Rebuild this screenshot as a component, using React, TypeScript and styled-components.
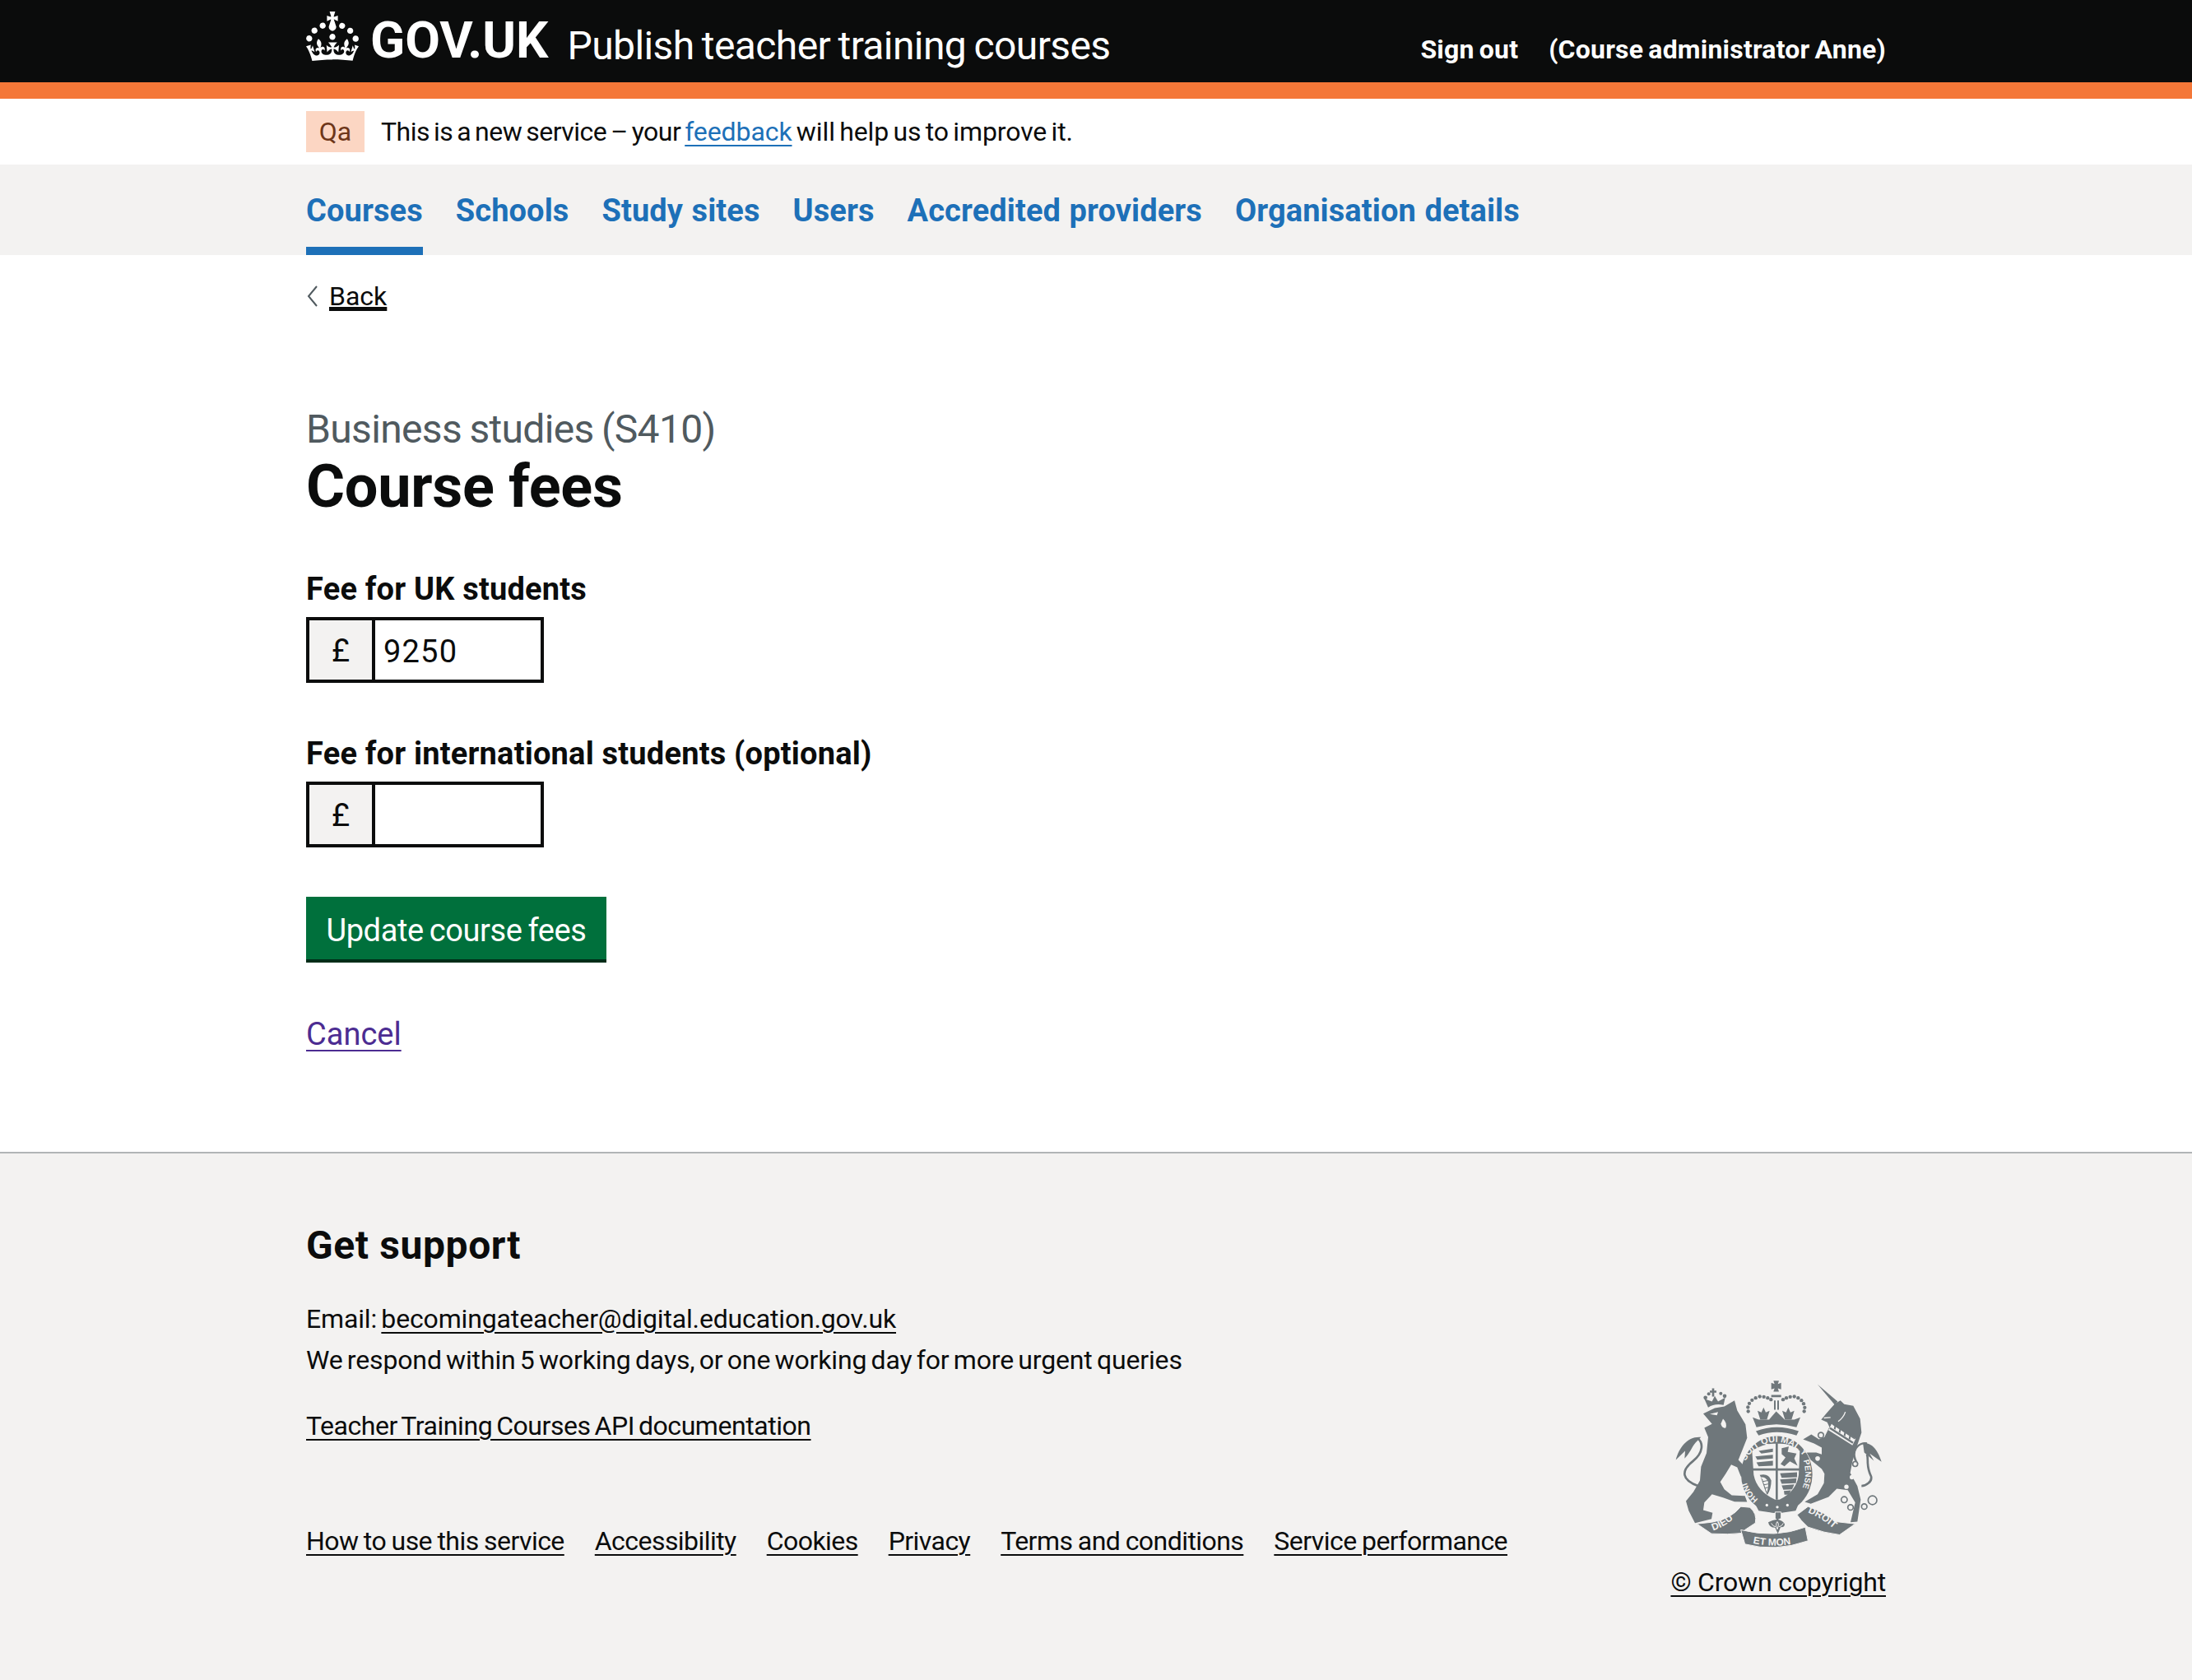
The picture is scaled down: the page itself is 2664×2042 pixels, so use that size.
import React from 'react'
import styled, { createGlobalStyle } from 'styled-components'

const BLACK = '#0b0c0c'
const BLUE = '#1d70b8'
const GREY_BG = '#f3f2f1'
const CREST = '#6f777b'
const FONT = 'Roboto, "Noto Sans", Arial, sans-serif'

const GlobalStyle = createGlobalStyle`
    html, body {
        margin: 0;
        padding: 0;
        background: #fff;
        color: ${BLACK};
        font-family: ${FONT};
    }
    * {
        box-sizing: border-box;
    }
`

const Container = styled.div`
    width: 1920px;
    margin: 0 auto;
`

const Header = styled.header`
    background: ${BLACK};
    height: 120px;
    border-bottom: 20px solid #f47738;
`

const HeaderInner = styled(Container)`
    display: flex;
    align-items: flex-start;
    justify-content: space-between;
`

const Brand = styled.div`
    display: flex;
    align-items: flex-start;
    padding-top: 14px;
`

const Crown = styled.svg`
    width: 64px;
    height: 60px;
    fill: #fff;
    flex: none;
`

const LogoText = styled.span`
    margin-left: 14px;
    margin-top: 5px;
    font-size: 62px;
    line-height: 60px;
    font-weight: 700;
    color: #fff;
`

const ServiceName = styled.span`
    margin-left: 23px;
    margin-top: 12px;
    font-size: 48px;
    line-height: 60px;
    color: #fff;
    letter-spacing: -0.6px;
    word-spacing: -2px;
`

const HeaderLinks = styled.div`
    display: flex;
    gap: 37px;
    padding-top: 40px;
`

const HeaderLink = styled.a`
    font-size: 32px;
    line-height: 40px;
    font-weight: 700;
    color: #fff;
    text-decoration: none;
    letter-spacing: 0.2px;
    word-spacing: -2px;
`

const PhaseBanner = styled.div`
    height: 80px;
    display: flex;
    align-items: center;
`

const PhaseRow = styled(Container)`
    display: flex;
    align-items: center;
    gap: 20px;
`

const PhaseTag = styled.strong`
    width: 71px;
    height: 50px;
    display: flex;
    align-items: center;
    justify-content: center;
    background: #fcd6c3;
    color: #6e3619;
    font-size: 32px;
    font-weight: 400;
`

const PhaseText = styled.span`
    font-size: 32px;
    line-height: 40px;
    letter-spacing: -0.1px;
    word-spacing: -2.5px;
`

const PhaseLead = styled.span`
    letter-spacing: -0.5px;
`

const Link = styled.a<{ $color?: string }>`
    color: ${(p) => p.$color ?? BLACK};
    text-decoration: underline;
    text-decoration-thickness: 2px;
    text-underline-offset: 0.16em;
`

const Nav = styled.nav`
    background: ${GREY_BG};
    height: 110px;
`

const NavList = styled(Container)`
    display: flex;
    gap: 40px;
`

const NavItem = styled.a<{ $active?: boolean }>`
    display: block;
    height: 110px;
    padding-top: 33px;
    font-size: 38px;
    line-height: 46px;
    font-weight: 700;
    color: ${BLUE};
    text-decoration: none;
    letter-spacing: 0.1px;
    word-spacing: 1px;
    border-bottom: 10px solid ${(p) => (p.$active ? BLUE : 'transparent')};
`

const BackLink = styled.a`
    display: inline-flex;
    align-items: center;
    gap: 12px;
    margin-top: 30px;
    font-size: 32px;
    line-height: 40px;
    color: ${BLACK};
`

const BackText = styled.span`
    text-decoration: underline;
    text-decoration-thickness: 2px;
    text-underline-offset: 0.16em;
`

const Chevron = styled.svg`
    width: 16px;
    height: 26px;
    fill: none;
    stroke: #505a5f;
    stroke-width: 2;
`

const Main = styled.main`
    height: 1090px;
`

const Caption = styled.div`
    margin-top: 112px;
    font-size: 48px;
    line-height: 60px;
    color: #505a5f;
    letter-spacing: -0.65px;
    word-spacing: -2px;
`

const Title = styled.h1`
    margin: 0 0 58px;
    font-size: 72px;
    line-height: 80px;
    font-weight: 700;
    letter-spacing: -0.3px;
`

const FieldLabel = styled.label`
    display: block;
    padding-top: 2px;
    font-size: 38px;
    line-height: 48px;
    font-weight: 700;
    margin-bottom: 10px;
    letter-spacing: 0.2px;
`

const Field = styled.div`
    margin-bottom: 60px;
`

const InputWrap = styled.div`
    display: flex;
`

const Prefix = styled.div`
    width: 80px;
    height: 80px;
    padding-top: 2px;
    border: 4px solid ${BLACK};
    border-right: 0;
    background: ${GREY_BG};
    display: flex;
    align-items: center;
    justify-content: center;
    font-size: 38px;
`

const Input = styled.input`
    width: 209px;
    height: 80px;
    border: 4px solid ${BLACK};
    border-radius: 0;
    padding: 3px 10px 0;
    font-family: ${FONT};
    font-size: 38px;
    letter-spacing: 1.2px;
    color: ${BLACK};
    outline: none;
`

const SubmitButton = styled.button`
    display: block;
    width: 365px;
    height: 80px;
    padding: 2px 0 0;
    border: 0;
    background: #00703c;
    box-shadow: inset 0 -4px 0 #002d18;
    color: #fff;
    font-family: ${FONT};
    font-size: 38px;
    letter-spacing: -0.4px;
    word-spacing: -2px;
`

const CancelRow = styled.div`
    margin-top: 62px;
    font-size: 38px;
    line-height: 50px;
`

const Footer = styled.footer`
    height: 642px;
    background: ${GREY_BG};
    border-top: 2px solid #b1b4b6;
    padding-top: 82px;
`

const FooterInner = styled(Container)`
    display: flex;
    justify-content: space-between;
    align-items: flex-end;
`

const FooterMain = styled.div`
    font-size: 32px;
    line-height: 50px;
    letter-spacing: -0.15px;
    word-spacing: -2.5px;
`

const SupportTitle = styled.h2`
    margin: 0 0 34px;
    font-size: 48px;
    line-height: 60px;
    font-weight: 700;
    letter-spacing: 0.6px;
    word-spacing: 0;
`

const ApiRow = styled.div`
    margin-top: 30px;
    letter-spacing: -0.45px;
`

const MetaLinks = styled.div`
    display: flex;
    gap: 37px;
    margin-top: 90px;
    margin-bottom: 50px;
    letter-spacing: -0.55px;
    word-spacing: -1px;
`

const CopyrightBlock = styled.div`
    display: flex;
    flex-direction: column;
    align-items: center;
    font-size: 32px;
    line-height: 50px;
    letter-spacing: -0.2px;
`

const CrestSvg = styled.svg`
    width: 255px;
    height: 207px;
    margin-bottom: 15px;
    display: block;
`

const CrestText = styled.text`
    font-family: "Liberation Sans", Arial, sans-serif;
    font-weight: 700;
    letter-spacing: 0;
    fill: ${GREY_BG};
`

function CrownLogo() {
    return (
        <Crown viewBox="0 0 32 30" aria-hidden="true">
            <path d="M22.6 10.4c-1 .4-2-.1-2.4-1-.4-.9.1-2 1-2.4.9-.4 2 .1 2.4 1s-.1 2-1 2.4m-5.9 6.7c-.9.4-2-.1-2.4-1-.4-.9.1-2 1-2.4.9-.4 2 .1 2.4 1s-.1 2-1 2.4m10.8-3.7c-1 .4-2-.1-2.4-1-.4-.9.1-2 1-2.4.9-.4 2 0 2.4 1s0 2-1 2.4m3.3 4.8c-1 .4-2-.1-2.4-1-.4-.9.1-2 1-2.4.9-.4 2-.1 2.4 1 .4 1 0 2-1 2.4M17 4.7l2.3 1.2V2.5l-2.3.7-.2-.2.9-3h-3.4l.9 3-.2.2c-.1.1-2.3-.7-2.3-.7v3.4L15 4.7c.1.1.1.2.2.2l-1.3 4c-.1.2-.1.4-.1.6 0 1.1.8 2 1.9 2.2h.7c1-.2 1.9-1.1 1.9-2.2 0-.2 0-.4-.1-.6l-1.3-4c-.1-.1 0-.2.1-.3m-7.6 5.7c.9.4 2-.1 2.4-1 .4-.9-.1-2-1-2.4-.9-.4-2 .1-2.4 1s0 2 1 2.4m-5 3c.9.4 2-.1 2.4-1 .4-.9-.1-2-1-2.4-.9-.4-2 .1-2.4 1s.1 2 1 2.4m-3.2 4.8c.9.4 2-.1 2.4-1 .4-1-.1-2-1-2.4-.9-.4-2-.1-2.4 1-.4 1 .1 2 1 2.4m14.8 11c4.4 0 8.6.3 12.3.8 1.1-4.5 2.4-7 3.7-8.8l-2.5-.9c.2 1.3.3 1.9 0 2.7-.4-.4-.8-1.1-1.1-2.3l-1.2 4c.7-.5 1.3-.8 2-.9-1.1 2.5-2.6 3.1-3.5 3-1.1-.2-1.7-1.2-1.5-2.1.3-1.2 1.5-1.5 2.1-.1 1.1-2.3-.8-3-2-2.3 1.9-1.9 2.1-3.5.6-5.6-2.1 1.6-2.1 3.2-1.2 5.5-1.2-1.4-3.2-.6-2.5 1.6.9-1.4 2.1-.5 1.9.8-.2 1.1-1.7 2.1-3.5 1.9-2.7-.2-2.9-2.1-2.9-3.6.7-.1 1.9.5 2.9 1.9l.4-4.3c-1.1 1.1-2.1 1.4-3.2 1.4.4-1.2 2.1-3 2.1-3h-5.4s1.7 1.9 2.1 3c-1.1 0-2.1-.2-3.2-1.4l.4 4.3c1-1.4 2.2-2 2.9-1.9-.1 1.5-.2 3.4-2.9 3.6-1.9.2-3.4-.8-3.5-1.9-.2-1.3 1-2.2 1.9-.8.7-2.3-1.2-3-2.5-1.6.9-2.2.9-3.9-1.2-5.5-1.5 2-1.3 3.7.6 5.6-1.2-.7-3.1 0-2 2.3.6-1.4 1.8-1.1 2.1.1.2.9-.3 1.9-1.5 2.1-.9.2-2.4-.5-3.5-3 .6 0 1.2.3 2 .9l-1.2-4c-.3 1.1-.7 1.9-1.1 2.3-.3-.8-.2-1.4 0-2.7l-2.9.9C1.3 23 2.6 25.5 3.7 30c3.7-.5 7.9-.8 12.3-.8" />
        </Crown>
    )
}

const CROWN_DOTS = [
    [372, 168], [371, 153], [376, 139], [386, 127], [399, 119], [414, 114], [429, 115], [443, 119], [455, 125],
    [499, 125], [511, 119], [525, 115], [540, 114], [554, 119], [566, 128], [574, 140], [578, 154], [576, 168],
]

const CHAIN_RINGS = [
    [637, 255, 10], [625, 340, 11], [762, 360, 9], [722, 490, 11], [745, 518, 10], [795, 515, 10], [825, 492, 16],
]

// hand drawn royal arms, coordinates follow a 3x crop of the reference
function RoyalArms() {
    return (
        <CrestSvg viewBox="100 50 765 620" aria-hidden="true">
            <defs>
                <path id="garterTop" d="M 362 350 A 125 130 0 0 1 572 330" />
                <path id="garterRight" d="M 572 345 A 125 135 0 0 1 540 492" />
                <path id="garterLeft" d="M 410 490 A 122 132 0 0 1 362 410" />
                <path id="ribbonLeft" d="M 240 604 Q 300 585 350 530" />
                <path id="ribbonMid" d="M 385 648 Q 470 668 560 645" />
                <path id="ribbonRight" d="M 585 535 Q 650 560 700 612" />
            </defs>
            <g fill={CREST}>
                {/* lion */}
                <path d="M208 176 L250 156 L285 150 L322 128 L332 165 L362 215 L368 265 L352 305 L336 345 L372 382 L366 412 L345 405 L332 372 L310 362 L290 395 L270 425 L285 452 L312 474 L360 476 L368 498 L322 497 L280 482 L240 470 L212 500 L208 528 L242 538 L238 560 L178 575 L155 530 L145 495 L172 462 L196 420 L200 370 L220 320 L226 262 L212 228 L240 214 Z" />
                <path d="M190 440 C130 420 125 385 170 350 C210 318 208 282 188 266" fill="none" stroke={CREST} strokeWidth="8" />
                <path d="M108 345 C120 300 150 258 200 262 L180 282 C165 300 160 320 140 340 L142 312 Z" />
                <path d="M212 122 L240 132 L250 112 L262 132 L288 118 L282 145 Q250 138 226 154 Z" />
                <circle cx="216" cy="118" r="7" />
                <circle cx="228" cy="104" r="6" />
                <circle cx="272" cy="103" r="6" />
                <circle cx="286" cy="112" r="7" />
                <path d="M232 92 h8 v-8 h8 v8 h8 v8 h-8 v14 h-8 v-14 h-8 z" />

                {/* unicorn */}
                <path d="M625 70 L698 132 L688 145 Z" />
                <path d="M688 140 L708 128 L722 142 L755 148 L780 195 L785 245 L770 290 L752 350 L744 392 L770 440 L782 490 L770 570 L745 572 L762 500 L735 455 L695 450 L665 480 L600 505 L578 498 L625 470 L648 430 L650 395 L640 378 L600 345 L585 318 L620 318 L640 325 L640 300 L612 285 L572 270 L602 252 L630 270 L650 262 L668 225 L660 208 L638 198 L660 172 Z" />
                <path d="M770 360 C740 310 775 280 805 285 M805 325 C812 345 800 365 820 405 C825 425 800 440 785 440" fill="none" stroke={CREST} strokeWidth="8" />
                <path d="M790 283 C830 280 850 325 858 352 L815 322 L830 348 L795 318 Z" />
            </g>
            <path d="M664 236 L752 292 L764 268 L676 214 Z" fill={GREY_BG} />
            <g fill={CREST}>
                <path d="M668 232 L752 286 L756 280 L672 226 Z M678 216 L760 270 L763 266 L681 212 Z" />
                <path d="M684 232 l3 -14 l5 3 l-2 14 z M702 244 l3 -14 l5 3 l-2 14 z M720 256 l3 -14 l5 3 l-2 14 z M738 268 l3 -14 l5 3 l-2 14 z" />
            </g>
            <path d="M648 192 L672 190 M700 205 Q720 190 726 170" fill="none" stroke={GREY_BG} strokeWidth="4" />
            <circle cx="730" cy="443" r="8" fill={GREY_BG} />
            <circle cx="750" cy="408" r="8" fill={GREY_BG} />
            <path d="M232 178 L262 170 L258 182 Z" fill={GREY_BG} />
            <path d="M280 195 Q296 210 290 228 Q278 232 272 214 Z" fill={GREY_BG} />
            {CHAIN_RINGS.map(([cx, cy, r], i) => (
                <circle key={i} cx={cx} cy={cy} r={r} fill={GREY_BG} stroke={CREST} strokeWidth="5" />
            ))}
            <g fill={CREST}>
                {/* crown */}
                {CROWN_DOTS.map(([cx, cy], i) => (
                    <circle key={i} cx={cx} cy={cy} r="6.5" />
                ))}
                <path d="M464 56 h20 l-4 12 l12 -4 v24 l-12 -4 l4 12 h-20 l4 -12 l-12 4 v-24 l12 4 z" />
                <path d="M456 108 h36 v8 h-36 z M466 128 h6 v34 h-6 z M478 128 h6 v34 h-6 z" />
                <path d="M428 154 L436 172 L450 166 L440 198 L416 198 L406 166 L420 172 Z" />
                <path d="M518 154 L526 172 L540 166 L530 198 L506 198 L496 166 L510 172 Z" />
                <path d="M474 168 L505 198 L476 212 L448 198 Z" />
                <path d="M388 190 L410 198 L540 198 L562 190 L548 226 Q475 204 402 226 Z" />
                <path d="M400 240 Q475 212 556 240 L548 256 Q475 232 410 256 Z" />

                {/* garter and shield */}
                <ellipse cx="476" cy="398" rx="130" ry="140" />
                <path d="M392 495 L440 510 L478 526 L515 510 L560 495 L545 530 L478 540 L410 530 Z" />
            </g>
            <path d="M386 312 Q430 282 474 286 H480 Q525 282 560 312 L556 400 Q548 460 486 490 H470 Q404 460 392 400 Z" fill={GREY_BG} />
            <g fill={CREST}>
                <path d="M386 376 H560 V384 H386 Z M472 284 H480 V490 H472 Z" />
                {/* three lions, first quarter */}
                <path d="M410 312 L462 304 L462 316 L420 322 Z M398 332 L462 326 L462 340 L405 344 Z M402 354 L462 348 L462 366 L410 368 Z" />
                {/* rampant lion */}
                <path d="M494 302 L520 296 L516 316 L548 322 L540 340 L552 366 L524 350 L504 368 L490 360 L508 336 L494 324 Z" />
                {/* harp */}
                <path d="M414 400 Q446 392 456 420 Q456 450 442 472 L438 468 Q448 444 444 424 Q436 406 418 408 Z" />
                <path d="M418 408 L436 462 L442 470 L424 416 Z" />
                {/* three lions, fourth quarter */}
                <path d="M488 394 L550 390 L550 408 L494 410 Z M488 416 L548 412 L546 430 L494 432 Z M494 438 L540 434 L532 452 L500 454 Z M502 458 L528 456 L520 472 L504 472 Z" />
            </g>
            <path d="M424 424 L444 420 M428 436 L448 432 M432 448 L450 444" fill="none" stroke={CREST} strokeWidth="3" />
            <circle cx="440" cy="510" r="5" fill={GREY_BG} />
            <circle cx="478" cy="517" r="5" fill={GREY_BG} />
            <circle cx="515" cy="510" r="5" fill={GREY_BG} />

            <g fill={CREST} stroke={GREY_BG} strokeWidth="3">
                {/* motto ribbon */}
                <path d="M185 578 L240 572 Q310 560 345 515 L378 518 Q405 540 398 575 L360 600 L350 612 Q300 618 238 614 Z" />
                <path d="M345 600 Q470 632 580 590 L590 640 Q470 682 360 652 Z" />
                <path d="M550 545 L590 515 Q650 535 690 570 L762 578 L705 618 Q650 612 590 590 L565 565 Z" />
                <path d="M470 535 H492 V558 L478 565 L470 558 Z" />
            </g>
            <path d="M478 562 Q495 565 505 578 Q505 592 490 590 L480 614 L470 592 Q448 592 445 572 Q460 565 478 562 Z" fill={CREST} />
            <path d="M478 570 Q470 578 478 598 Q486 578 478 570 M456 576 Q464 590 472 588 M500 576 Q492 590 484 588" fill="none" stroke={GREY_BG} strokeWidth="3" />
            <CrestText fontSize="33">
                <textPath href="#garterTop">SOIT QUI MAL Y</textPath>
            </CrestText>
            <CrestText fontSize="30">
                <textPath href="#garterRight" startOffset="2">PENSE</textPath>
            </CrestText>
            <CrestText fontSize="30">
                <textPath href="#garterLeft" startOffset="2">HONI</textPath>
            </CrestText>
            <CrestText fontSize="36">
                <textPath href="#ribbonLeft" startOffset="4">DIEU</textPath>
            </CrestText>
            <CrestText fontSize="36">
                <textPath href="#ribbonMid" startOffset="4">ET MON</textPath>
            </CrestText>
            <CrestText fontSize="36">
                <textPath href="#ribbonRight" startOffset="4">DROIT</textPath>
            </CrestText>
        </CrestSvg>
    )
}

const NAV_ITEMS = ['Courses', 'Schools', 'Study sites', 'Users', 'Accredited providers', 'Organisation details']
const META_LINKS = ['How to use this service', 'Accessibility', 'Cookies', 'Privacy', 'Terms and conditions', 'Service performance']

export default function App() {
    return (
        <>
            <GlobalStyle />
            <Header>
                <HeaderInner>
                    <Brand>
                        <CrownLogo />
                        <LogoText>GOV.UK</LogoText>
                        <ServiceName>Publish teacher training courses</ServiceName>
                    </Brand>
                    <HeaderLinks>
                        <HeaderLink href="#">Sign out</HeaderLink>
                        <HeaderLink href="#">(Course administrator Anne)</HeaderLink>
                    </HeaderLinks>
                </HeaderInner>
            </Header>
            <PhaseBanner>
                <PhaseRow>
                    <PhaseTag>Qa</PhaseTag>
                    <PhaseText>
                        <PhaseLead>This is a new service – your </PhaseLead><Link href="#" $color={BLUE}>feedback</Link> will help us to improve it.
                    </PhaseText>
                </PhaseRow>
            </PhaseBanner>
            <Nav>
                <NavList>
                    {NAV_ITEMS.map((item, i) => (
                        <NavItem key={item} href="#" $active={i === 0}>{item}</NavItem>
                    ))}
                </NavList>
            </Nav>
            <Main>
                <Container>
                    <BackLink href="#">
                        <Chevron viewBox="0 0 16 26">
                            <path d="M13 1 L3 13 L13 25" />
                        </Chevron>
                        <BackText>Back</BackText>
                    </BackLink>
                    <Caption>Business studies (S410)</Caption>
                    <Title>Course fees</Title>
                    <Field>
                        <FieldLabel>Fee for UK students</FieldLabel>
                        <InputWrap>
                            <Prefix>£</Prefix>
                            <Input defaultValue="9250" />
                        </InputWrap>
                    </Field>
                    <Field>
                        <FieldLabel>Fee for international students (optional)</FieldLabel>
                        <InputWrap>
                            <Prefix>£</Prefix>
                            <Input defaultValue="" />
                        </InputWrap>
                    </Field>
                    <SubmitButton>Update course fees</SubmitButton>
                    <CancelRow>
                        <Link href="#" $color="#4c2c92">Cancel</Link>
                    </CancelRow>
                </Container>
            </Main>
            <Footer>
                <FooterInner>
                    <FooterMain>
                        <SupportTitle>Get support</SupportTitle>
                        <div>Email: <Link href="#">becomingateacher@digital.education.gov.uk</Link></div>
                        <div>We respond within 5 working days, or one working day for more urgent queries</div>
                        <ApiRow><Link href="#">Teacher Training Courses API documentation</Link></ApiRow>
                        <MetaLinks>
                            {META_LINKS.map((item) => (
                                <Link key={item} href="#">{item}</Link>
                            ))}
                        </MetaLinks>
                    </FooterMain>
                    <CopyrightBlock>
                        <RoyalArms />
                        <Link href="#">© Crown copyright</Link>
                    </CopyrightBlock>
                </FooterInner>
            </Footer>
        </>
    )
}
